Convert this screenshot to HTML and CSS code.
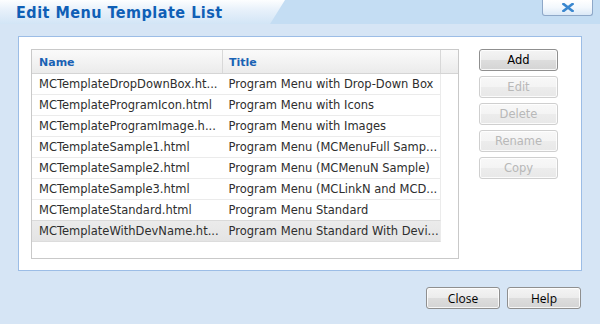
FILE: index.html
```html
<!DOCTYPE html>
<html lang="en">
<head>
  <meta charset="UTF-8" />
  <title>Edit Menu Template List</title>
  <link rel="stylesheet" href="styles.css">
</head>
<body>
  <div class="dialog">
    <!-- Title bar -->
    <header class="titlebar">
      <h1>Edit Menu Template List</h1>
      <button class="close-x" title="Close">
        <svg width="12" height="9" viewBox="0 0 12 9">
          <path d="M1.5 1 L10.5 8 M10.5 1 L1.5 8" stroke="#3a87cf" stroke-width="2.6" stroke-linecap="square"/>
        </svg>
      </button>
    </header>

    <!-- Main panel -->
    <main class="panel">
      <div class="grid">
        <div class="grid-head">
          <div class="col-name">Name</div>
          <div class="col-title">Title</div>
          <div class="col-pad"></div>
        </div>
        <div class="grid-body">
          <div class="row"><div class="col-name">MCTemplateDropDownBox.ht...</div><div class="col-title">Program Menu with Drop-Down Box</div></div>
          <div class="row"><div class="col-name">MCTemplateProgramIcon.html</div><div class="col-title">Program Menu with Icons</div></div>
          <div class="row"><div class="col-name">MCTemplateProgramImage.h...</div><div class="col-title">Program Menu with Images</div></div>
          <div class="row"><div class="col-name">MCTemplateSample1.html</div><div class="col-title">Program Menu (MCMenuFull Samp...</div></div>
          <div class="row"><div class="col-name">MCTemplateSample2.html</div><div class="col-title">Program Menu (MCMenuN Sample)</div></div>
          <div class="row"><div class="col-name">MCTemplateSample3.html</div><div class="col-title">Program Menu (MCLinkN and MCD...</div></div>
          <div class="row"><div class="col-name">MCTemplateStandard.html</div><div class="col-title">Program Menu Standard</div></div>
          <div class="row selected"><div class="col-name">MCTemplateWithDevName.ht...</div><div class="col-title">Program Menu Standard With Devi...</div></div>
        </div>
      </div>

      <div class="actions">
        <button class="btn">Add</button>
        <button class="btn" disabled>Edit</button>
        <button class="btn" disabled>Delete</button>
        <button class="btn" disabled>Rename</button>
        <button class="btn" disabled>Copy</button>
      </div>
    </main>

    <!-- Footer buttons -->
    <footer class="footer">
      <button class="btn btn-wide">Close</button>
      <button class="btn btn-wide">Help</button>
    </footer>
  </div>
</body>
</html>
```

FILE: styles.css
```css
:root {
  --bg: #d6e5f5;
  --title-blue: #0f5fb6;
  --panel-border: #9cbde6;
  --grid-border: #c9c9c9;
  --row-line: #ebebeb;
  --text: #2e2e2e;
}

html, body {
  margin: 0;
  padding: 0;
  height: 100%;
}

body {
  background: var(--bg);
  font-family: "DejaVu Sans", Verdana, sans-serif;
  font-size: 11.5px;
  color: var(--text);
}

.dialog {
  width: 600px;
  height: 324px;
  display: flex;
  flex-direction: column;
}

/* Title bar */
.titlebar {
  position: relative;
  height: 24px;
  display: flex;
  align-items: flex-start;
  justify-content: space-between;
  background: #c4ddf3;
}

.titlebar::before {
  content: "";
  position: absolute;
  left: 0;
  top: 0;
  width: 285px;
  height: 24px;
  background: linear-gradient(to bottom, #fdfeff 0%, #e6f0fa 45%, #d2e5f6 100%);
  clip-path: polygon(0 0, 285px 0, 270px 24px, 0 24px);
}

.titlebar h1 {
  position: relative;
  margin: 3px 0 0 16px;
  font-family: "DejaVu Sans Condensed", "DejaVu Sans", sans-serif;
  font-size: 16px;
  font-weight: bold;
  color: var(--title-blue);
  letter-spacing: 0.5px;
}

.close-x {
  margin: 0 7px 0 0;
  width: 51px;
  height: 16px;
  padding: 0;
  border: 1px solid #8ea8c8;
  border-top: none;
  border-radius: 0 0 3px 3px;
  background: linear-gradient(to bottom, #ffffff 0%, #f3f8fd 50%, #dbe9f7 100%);
  display: flex;
  align-items: center;
  justify-content: center;
}

.close-x svg {
  display: block;
  margin-top: -1px;
}

/* Panel */
.panel {
  margin: 12px 0 0 18px;
  width: 564px;
  height: 235px;
  box-sizing: border-box;
  background: #fff;
  border: 1px solid var(--panel-border);
  display: flex;
  align-items: flex-start;
  padding: 12px 0 0 12px;
  gap: 20px;
}

.grid {
  width: 428px;
  height: 210px;
  box-sizing: border-box;
  border: 1px solid var(--grid-border);
  display: flex;
  flex-direction: column;
}

.grid-head {
  display: flex;
  height: 24px;
  box-sizing: border-box;
  border-bottom: 1px solid #d5d5d5;
  background: linear-gradient(to bottom, #fafafa 0%, #f3f3f3 50%, #ebebeb 100%);
  font-weight: bold;
  font-size: 11px;
  color: #1a62b4;
}

.grid-head > div {
  display: flex;
  align-items: center;
  box-sizing: border-box;
  border-right: 1px solid #d8d8d8;
  padding-top: 2px;
}

.grid-head .col-pad {
  flex: 1;
  border-right: none;
}

.col-name {
  width: 191px;
  padding-left: 7px;
  box-sizing: border-box;
  white-space: nowrap;
  overflow: hidden;
}

.col-title {
  width: 218px;
  padding-left: 6px;
  box-sizing: border-box;
  white-space: nowrap;
  overflow: hidden;
}

.grid-body {
  display: flex;
  flex-direction: column;
}

.row {
  display: flex;
  width: 409px;
  height: 21px;
  box-sizing: border-box;
  border-bottom: 1px solid var(--row-line);
  border-right: 1px solid var(--row-line);
  align-items: center;
}

.row.selected {
  background: linear-gradient(to bottom, #ebebeb, #e4e4e4);
  border-top: 1px solid #dadada;
  border-bottom-color: #dcdcdc;
  margin-top: -1px;
  height: 22px;
}

/* Buttons */
.actions {
  display: flex;
  flex-direction: column;
  gap: 5px;
}

.btn {
  width: 79px;
  height: 22px;
  padding: 0;
  font-family: "DejaVu Sans", Tahoma, sans-serif;
  font-size: 11.5px;
  color: #000;
  border: 1px solid #8f8f8f;
  border-radius: 3px;
  background: linear-gradient(to bottom, #f4f4f4 0%, #ececec 48%, #dddddd 52%, #d4d4d4 100%);
  box-shadow: inset 0 0 0 1px rgba(255,255,255,0.8);
  cursor: pointer;
}

.btn:disabled {
  color: #b8b8b8;
  border-color: #cfcfcf;
  background: linear-gradient(to bottom, #f8f8f8 0%, #f4f4f4 48%, #ececec 52%, #e8e8e8 100%);
  cursor: default;
}

.footer {
  display: flex;
  justify-content: flex-end;
  gap: 7px;
  padding: 16px 19px 0 0;
}

.btn-wide {
  width: 74px;
  height: 22px;
  font-family: "Open Sans", "DejaVu Sans", sans-serif;
  font-size: 12px;
}
```
